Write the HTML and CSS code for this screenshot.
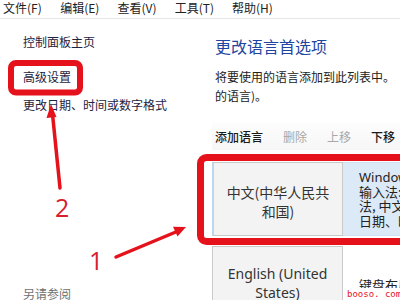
FILE: index.html
```html
<!DOCTYPE html>
<html lang="zh-CN">
<head>
<meta charset="utf-8">
<title>语言</title>
<link rel="stylesheet" href="styles.css">
</head>
<body>
<div class="page">
  <div class="menubar">
    <span class="menu">文件(F)</span>
    <span class="menu">编辑(E)</span>
    <span class="menu">查看(V)</span>
    <span class="menu">工具(T)</span>
    <span class="menu">帮助(H)</span>
  </div>
  <div class="main">
    <aside class="side">
      <a class="link home">控制面板主页</a>
      <a class="link adv">高级设置</a>
      <a class="link date">更改日期、时间或数字格式</a>
      <div class="seealso">另请参阅</div>
    </aside>
    <section class="content">
      <h1 class="title">更改语言首选项</h1>
      <p class="desc"><span class="line">将要使用的语言添加到此列表中。</span><span class="line">的语言)。</span></p>
      <div class="toolbar">
        <span class="tool on">添加语言</span>
        <span class="tool off">删除</span>
        <span class="tool off">上移</span>
        <span class="tool on">下移</span>
      </div>
      <div class="langs">
        <div class="row selected">
          <div class="name">中文(中华人民共和国)</div>
          <div class="info">
            <span class="line latin">Windows 显示语言: 已启用</span>
            <span class="line">输入法: 微软拼音输入</span>
            <span class="line">法, 中文(简体) - 美式键盘</span>
            <span class="line">日期、时间和数字格式</span>
          </div>
        </div>
        <div class="row">
          <div class="name latin">English (United States)</div>
          <div class="info center">
            <span class="line">键盘布局: 美式键盘</span>
          </div>
        </div>
      </div>
    </section>
  </div>
  <svg class="annot" width="400" height="300" viewBox="0 0 400 300">
    <rect x="11" y="63" width="69" height="29.5" rx="5" fill="none" stroke="#e5121b" stroke-width="6"/>
    <rect x="200.5" y="157.5" width="230" height="84" rx="6" fill="none" stroke="#e5121b" stroke-width="7"/>
    <line x1="60" y1="188" x2="52.5" y2="114" stroke="#e5121b" stroke-width="3.5" stroke-linecap="round"/>
    <polygon points="51,104 46.5,118 56.5,117" fill="#e5121b"/>
    <line x1="116" y1="257" x2="177" y2="231.5" stroke="#e5121b" stroke-width="3.5" stroke-linecap="round"/>
    <polygon points="186,227 177.5,236.5 173,226.8" fill="#e5121b"/>
    <text x="55" y="217" class="num">2</text>
    <text x="89" y="270" class="num">1</text>
  </svg>
  <div class="watermark">booso. com</div>
</div>
</body>
</html>
```
FILE: styles.css
```css
* { box-sizing: border-box; }
html, body { margin: 0; padding: 0; }
body {
  width: 400px;
  height: 300px;
  overflow: hidden;
  background: #fff;
  font-family: "Noto Sans CJK SC", "Noto Sans", sans-serif;
  color: #1a1a1a;
}
.page {
  position: relative;
  width: 400px;
  height: 300px;
  overflow: hidden;
}
.menubar {
  display: grid;
  grid-template-columns: repeat(5, 57.25px);
  height: 19px;
  padding-left: 3px;
  border-bottom: 1px solid #e6e6e6;
  background: #fff;
  font-size: 12px;
  line-height: 16px;
  color: #222;
}
.menu { white-space: nowrap; }
.main {
  display: grid;
  grid-template-columns: 212px 1fr;
}
.side {
  display: flex;
  flex-direction: column;
  align-items: flex-start;
  padding-left: 23px;
  padding-top: 15px;
  font-size: 12px;
  line-height: 16px;
}
.link {
  color: #1e2340;
  white-space: nowrap;
}
.adv { margin-top: 19px; }
.date { margin-top: 12px; }
.seealso {
  margin-top: 173px;
  color: #707070;
  white-space: nowrap;
}
.content {
  min-width: 0;
}
.title {
  margin: 16px 0 0 3px;
  font-size: 16px;
  line-height: 22px;
  font-weight: 400;
  color: #2244a0;
  white-space: nowrap;
}
.desc {
  margin: 10px 0 0 3px;
  font-size: 12px;
  line-height: 19px;
  color: #222;
}
.desc .line, .info .line {
  display: block;
  white-space: nowrap;
}
.toolbar {
  display: flex;
  gap: 20px;
  margin-top: 17px;
  height: 28px;
  padding-left: 3px;
  align-items: center;
  font-size: 12px;
  background: linear-gradient(#fdfdfd, #f6f6f6);
}
.tool { white-space: nowrap; }
.tool.on { color: #1a1a1a; font-weight: 500; }
.tool.off { color: #a8a8a8; }
.langs {
  display: flex;
  flex-direction: column;
  gap: 10px;
  margin-top: 12px;
}
.row {
  display: grid;
  grid-template-columns: 131px 140px;
  height: 74px;
}
.name {
  display: flex;
  align-items: center;
  justify-content: center;
  padding: 0 10px;
  text-align: center;
  font-size: 14px;
  line-height: 19px;
  color: #333;
  background: #f3f3f3;
  border: 1px solid #c9c9c9;
}
.selected .name {
  border-left: 2px solid #bcd6ee;
  padding-top: 5px;
}
.latin { font-family: "Noto Sans", "Noto Sans CJK SC", sans-serif; }
.info {
  padding: 7px 0 0 16px;
  font-size: 13px;
  line-height: 14.5px;
  color: #222;
  overflow: hidden;
}
.selected .info {
  background: #dce9f7;
  border-top: 1px solid #cfe0f2;
  border-bottom: 1px solid #cfe0f2;
}
.info.center {
  display: flex;
  flex-direction: column;
  justify-content: center;
  padding-top: 5px;
}
.annot {
  position: absolute;
  left: 0;
  top: 0;
  pointer-events: none;
}
.num {
  font-family: "Open Sans", "Liberation Sans", sans-serif;
  font-size: 25px;
  fill: #d8202c;
}
.watermark {
  position: absolute;
  left: 345px;
  top: 288px;
  width: 55px;
  height: 12px;
  padding-left: 2px;
  background: #fff;
  color: #e5121b;
  font-family: "DejaVu Sans Mono", "Liberation Mono", monospace;
  font-size: 9px;
  line-height: 12px;
  white-space: nowrap;
}
```
